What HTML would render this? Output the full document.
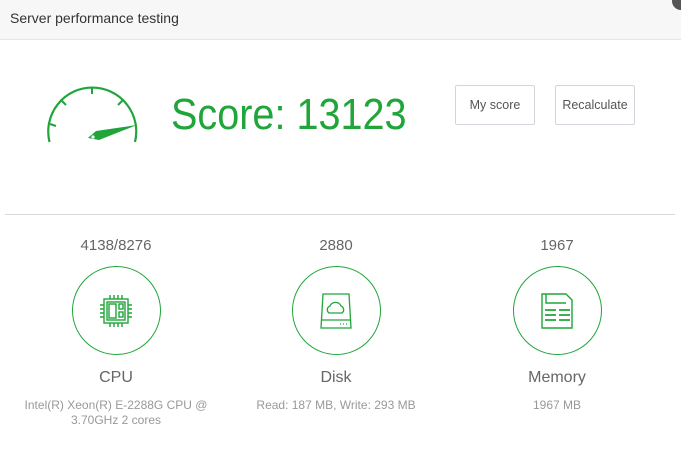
<!DOCTYPE html>
<html><head><meta charset="utf-8"><style>
*{margin:0;padding:0;box-sizing:border-box}
body{width:681px;height:457px;background:#fff;font-family:"Liberation Sans",sans-serif;position:relative;overflow:hidden}
.hdr{position:absolute;left:0;top:0;width:681px;height:40px;background:#f7f7f7;border-bottom:1px solid #e6e6e6}
.hdr span{position:absolute;left:10px;top:10px;font-size:14px;color:#333}
.dot{position:absolute;left:672px;top:-8px;width:18px;height:18px;border-radius:50%;background:#555}
.score{position:absolute;left:171px;top:90px;font-size:44px;color:#20a53a;transform:scaleX(0.9);transform-origin:0 0;white-space:nowrap}
.btn{position:absolute;top:85px;height:40px;border:1px solid #d4d4dc;border-radius:2px;font-size:12.5px;color:#555;display:flex;align-items:center;justify-content:center;background:#fff}
.line{position:absolute;left:5px;top:214px;width:670px;height:1px;background:#d9d9d9}
.col{position:absolute;top:236px;width:220px;text-align:center}
.num{font-size:15px;color:#666;height:20px;line-height:20px}
.circ{margin:10px auto 0;width:89px;height:89px;border:1.3px solid #20a53a;border-radius:50%;display:flex;align-items:center;justify-content:center}
.lbl{margin-top:13px;font-size:16px;color:#666;line-height:20px}
.sub{margin-top:10px;font-size:12px;color:#999;line-height:15px}
</style></head><body>
<div class="hdr"><span>Server performance testing</span></div>
<div class="dot"></div>
<svg style="position:absolute;left:0;top:0" width="200" height="160">
<path d="M49.5 142 A44 44 0 1 1 135 142" fill="none" stroke="#20a53a" stroke-width="2.2"/>
<g stroke="#20a53a" stroke-width="2">
<line x1="92" y1="87" x2="92" y2="94"/>
<line x1="61" y1="100" x2="66" y2="105"/>
<line x1="123" y1="100" x2="118" y2="105"/>
<line x1="50" y1="124" x2="56" y2="126"/>
</g>
<path d="M88 138 L96 131 L137 125 L99 140 Z" fill="#20a53a"/>
<circle cx="93" cy="137" r="1.6" fill="#fff"/>
</svg>
<div class="score">Score: 13123</div>
<div class="btn" style="left:455px;width:80px">My score</div>
<div class="btn" style="left:555px;width:80px">Recalculate</div>
<div class="line"></div>
<div class="col" style="left:6px">
<div class="num">4138/8276</div>
<div class="circ"><svg width="32" height="34" viewBox="0 0 32 34" fill="none" stroke="#20a53a" stroke-width="1.4">
<rect x="4" y="5" width="24" height="24"/><rect x="7" y="8" width="18" height="18"/>
<rect x="9" y="10" width="7" height="14"/><rect x="19" y="10" width="4" height="5"/><rect x="19" y="18" width="4" height="5"/>
<path d="M10 1v4M14 1v4M18 1v4M22 1v4M10 29v4M14 29v4M18 29v4M22 29v4M0 11h4M0 15h4M0 19h4M0 23h4M28 11h4M28 15h4M28 19h4M28 23h4"/>
</svg></div>
<div class="lbl">CPU</div>
<div class="sub">Intel(R) Xeon(R) E-2288G CPU @<br>3.70GHz 2 cores</div>
</div>
<div class="col" style="left:226px">
<div class="num">2880</div>
<div class="circ"><svg width="32" height="36" viewBox="0 0 32 36" fill="none" stroke="#20a53a" stroke-width="1.3">
<path d="M3 1h26l2 34H1z"/><path d="M1 27h30"/>
<path d="M9 20a4 4 0 0 1 1-7 6 6 0 0 1 11 0 4 4 0 0 1 1 7z"/>
<path d="M23 31h1M26 31h1M20 31h1"/>
</svg></div>
<div class="lbl">Disk</div>
<div class="sub">Read: 187 MB, Write: 293 MB</div>
</div>
<div class="col" style="left:447px">
<div class="num">1967</div>
<div class="circ"><svg width="32" height="36" viewBox="0 0 32 36" fill="none" stroke="#20a53a" stroke-width="1.4">
<path d="M1 1h24l6 6v28H1z"/><path d="M5 1v9h20"/>
<path d="M4 17h11M18 17h11M4 22h11M18 22h11M4 27h11M18 27h11" stroke-width="1.8"/>
</svg></div>
<div class="lbl">Memory</div>
<div class="sub">1967 MB</div>
</div>
</body></html>
